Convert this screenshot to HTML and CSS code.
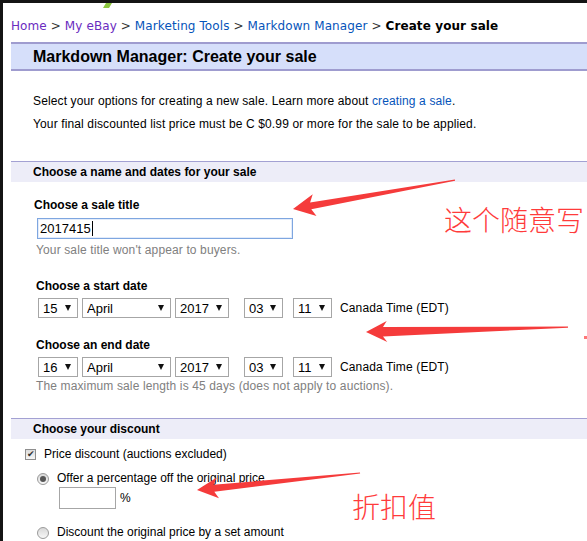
FILE: index.html
```html
<!DOCTYPE html>
<html lang="en">
<head>
<meta charset="utf-8">
<title>Markdown Manager: Create your sale</title>
<link rel="stylesheet" href="styles.css">
</head>
<body>
<div class="frame">
	<div class="crumbs">
		<a href="#" class="visited">Home</a> &gt;
		<a href="#" class="visited">My eBay</a> &gt;
		<a href="#">Marketing Tools</a> &gt;
		<a href="#">Markdown Manager</a> &gt;
		<b>Create your sale</b>
	</div>

	<h1 class="pagehead">Markdown Manager: Create your sale</h1>

	<div class="intro">
		<p>Select your options for creating a new sale. Learn more about <a href="#">creating a sale</a>.</p>
		<p>Your final discounted list price must be C $0.99 or more for the sale to be applied.</p>
	</div>

	<h2 class="sechead">Choose a name and dates for your sale</h2>

	<div class="fields">
		<div class="label label-title">Choose a sale title</div>
		<div class="title-box"><span class="title-value">2017415</span><span class="caret"></span></div>
		<div class="hint hint-title">Your sale title won't appear to buyers.</div>

		<div class="label label-start">Choose a start date</div>
		<div class="daterow">
			<span class="sel w-day"><select><option>15</option></select></span>
			<span class="sel w-month"><select><option>April</option></select></span>
			<span class="sel w-year"><select><option>2017</option></select></span>
			<span class="sel w-hour"><select><option>03</option></select></span>
			<span class="sel w-min"><select><option>11</option></select></span>
			<span class="tz">Canada Time (EDT)</span>
		</div>

		<div class="label label-end">Choose an end date</div>
		<div class="daterow">
			<span class="sel w-day"><select><option>16</option></select></span>
			<span class="sel w-month"><select><option>April</option></select></span>
			<span class="sel w-year"><select><option>2017</option></select></span>
			<span class="sel w-hour"><select><option>03</option></select></span>
			<span class="sel w-min"><select><option>11</option></select></span>
			<span class="tz">Canada Time (EDT)</span>
		</div>
		<div class="hint hint-end">The maximum sale length is 45 days (does not apply to auctions).</div>
	</div>

	<h2 class="sechead sechead-2">Choose your discount</h2>

	<div class="discount">
		<div class="opt opt-check"><span class="checkbox">&#10004;</span>Price discount (auctions excluded)</div>
		<div class="opt opt-radio"><span class="radio on"></span>Offer a percentage off the original price</div>
		<div class="pct"><input type="text" class="pct-input"> %</div>
		<div class="opt opt-radio opt-last"><span class="radio"></span>Discount the original price by a set amount</div>
	</div>
</div>

<!-- screenshot annotations -->
<svg class="marks" width="587" height="541" viewBox="0 0 587 541">
	<polygon fill="#8cc63f" points="106,3 112,3 109,8 103,8"/>
	<polygon fill="#f53b3b" points="293,209 312.7,194.3 310.1,202.4 454.9,179.5 455.1,180.8 311.3,209.2 316.5,215.9"/>
	<polygon fill="#f53b3b" points="366,332 386.7,321 383,327 568,326.5 568,327.8 383,336.5 387.3,342"/>
	<polygon fill="#f53b3b" points="197,490 216.8,477.4 213.5,484.7 360,472.5 360.1,473.6 214.3,491.7 219,498.2"/>
	<rect fill="#f77" x="584" y="336" width="3" height="3"/>
</svg>
<div class="note note-1">这个随意写</div>
<div class="note note-2">折扣值</div>
</body>
</html>
```

FILE: styles.css
```css
* {
	box-sizing: border-box;
}
body {
	margin: 0;
	background: #fff;
	font-family: "Liberation Sans", Arial, sans-serif;
	font-size: 12px;
	color: #000;
	overflow: hidden;
}
a {
	color: #0654ba;
	text-decoration: none;
}
p {
	margin: 0;
}
.frame {
	height: 541px;
	border-top: 3px solid #141414;
	border-left: 3px solid #141414;
}

/* breadcrumb */
.crumbs {
	padding: 15px 0 0 8px;
	font-family: "DejaVu Sans", Verdana, sans-serif;
	font-size: 12px;
	line-height: 16px;
	letter-spacing: 0.1px;
	color: #333;
	white-space: nowrap;
}
.crumbs a.visited {
	color: #6a2bc0;
}
.crumbs b {
	color: #000;
}

/* page heading band */
.pagehead {
	margin: 8px 0 0 8px;
	padding-left: 22px;
	height: 29px;
	line-height: 25px;
	font-size: 16px;
	font-weight: bold;
	background: #d6dffa;
	border-top: 2px solid #9f9ccf;
	border-bottom: 2px solid #9f9ccf;
}

.intro {
	padding: 23px 0 0 30px;
	line-height: 15px;
	letter-spacing: 0.13px;
}
.intro p + p {
	margin-top: 8px;
}

/* section heading */
.sechead {
	margin: 29px 0 0 8px;
	padding-left: 22px;
	height: 21px;
	line-height: 20px;
	font-size: 12px;
	font-weight: bold;
	background: #ededf8;
	border-top: 1px solid #a3a1d3;
}
.sechead-2 {
	margin-top: 24px;
}

.fields {
	padding-left: 33px;
}
.label {
	font-weight: bold;
	line-height: 15px;
}
.label-title {
	margin: 16px 0 0 -2px;
}
.label-start {
	margin-top: 21px;
}
.label-end {
	margin-top: 20px;
}
.hint {
	color: #808080;
	line-height: 15px;
	letter-spacing: 0.13px;
}
.hint-title {
	margin-top: 4px;
}
.hint-end {
	margin-top: 2px;
}
.title-box {
	display: flex;
	align-items: center;
	margin: 5px 0 0 1px;
	width: 256px;
	height: 21px;
	padding: 0 2px;
	font-size: 13px;
	border: 1px solid #7ea6e0;
	box-shadow: inset 0 0 0 1px #e3ecfa;
}
.caret {
	width: 1px;
	height: 15px;
	margin-left: 1px;
	background: #000;
}

/* date selects */
.daterow {
	display: flex;
	align-items: center;
	margin: 4px 0 0 2px;
	height: 20px;
}
.sel {
	position: relative;
	display: block;
	flex: none;
	height: 20px;
	margin-right: 4px;
}
.sel select {
	appearance: none;
	-webkit-appearance: none;
	display: block;
	width: 100%;
	height: 20px;
	padding: 0 0 0 4px;
	font-family: "Liberation Sans", Arial, sans-serif;
	font-size: 13px;
	color: #000;
	background: #fff;
	border: 1px solid #a6a6a6;
	border-radius: 0;
}
.sel::after {
	content: "";
	position: absolute;
	right: 7px;
	top: 7px;
	border-left: 3px solid transparent;
	border-right: 3px solid transparent;
	border-top: 6px solid #111;
}
.w-day { width: 40px; }
.w-month { width: 89px; }
.w-year { width: 54px; margin-right: 15px; }
.w-hour { width: 39px; margin-right: 10px; }
.w-min { width: 39px; margin-right: 8px; }
.tz {
	font-size: 12px;
	letter-spacing: 0.13px;
}

/* discount options */
.discount {
	padding-left: 22px;
}
.opt {
	display: flex;
	align-items: center;
	line-height: 15px;
}
.opt-check {
	margin-top: 8px;
}
.opt-radio {
	margin: 9px 0 0 12px;
}
.opt-last {
	margin-top: 16px;
}
.checkbox {
	width: 11px;
	height: 11px;
	margin-right: 8px;
	border: 1px solid #8e8e8e;
	background: linear-gradient(#dcdcdc, #f6f6f6);
	font-size: 9px;
	line-height: 9px;
	text-align: center;
	color: #333;
}
.radio {
	width: 12px;
	height: 12px;
	margin-right: 8px;
	border: 1px solid #9a9a9a;
	border-radius: 50%;
	background: linear-gradient(#d8d8d8, #f8f8f8);
	display: flex;
	align-items: center;
	justify-content: center;
}
.radio.on::after {
	content: "";
	width: 6px;
	height: 6px;
	border-radius: 50%;
	background: #555;
}
.pct {
	display: flex;
	align-items: center;
	margin: 1px 0 0 34px;
	gap: 4px;
}
.pct-input {
	width: 57px;
	height: 22px;
	border: 1px solid #a6a6a6;
	outline: none;
}

/* annotations */
.marks {
	position: absolute;
	top: 0;
	left: 0;
	pointer-events: none;
}
.note {
	position: absolute;
	font-family: "Noto Sans CJK SC", sans-serif;
	font-weight: 300;
	font-size: 28px;
	line-height: 30px;
	color: #ff3b3b;
	white-space: nowrap;
}
.note-1 {
	left: 444px;
	top: 204px;
}
.note-2 {
	left: 352px;
	top: 491px;
}
```
